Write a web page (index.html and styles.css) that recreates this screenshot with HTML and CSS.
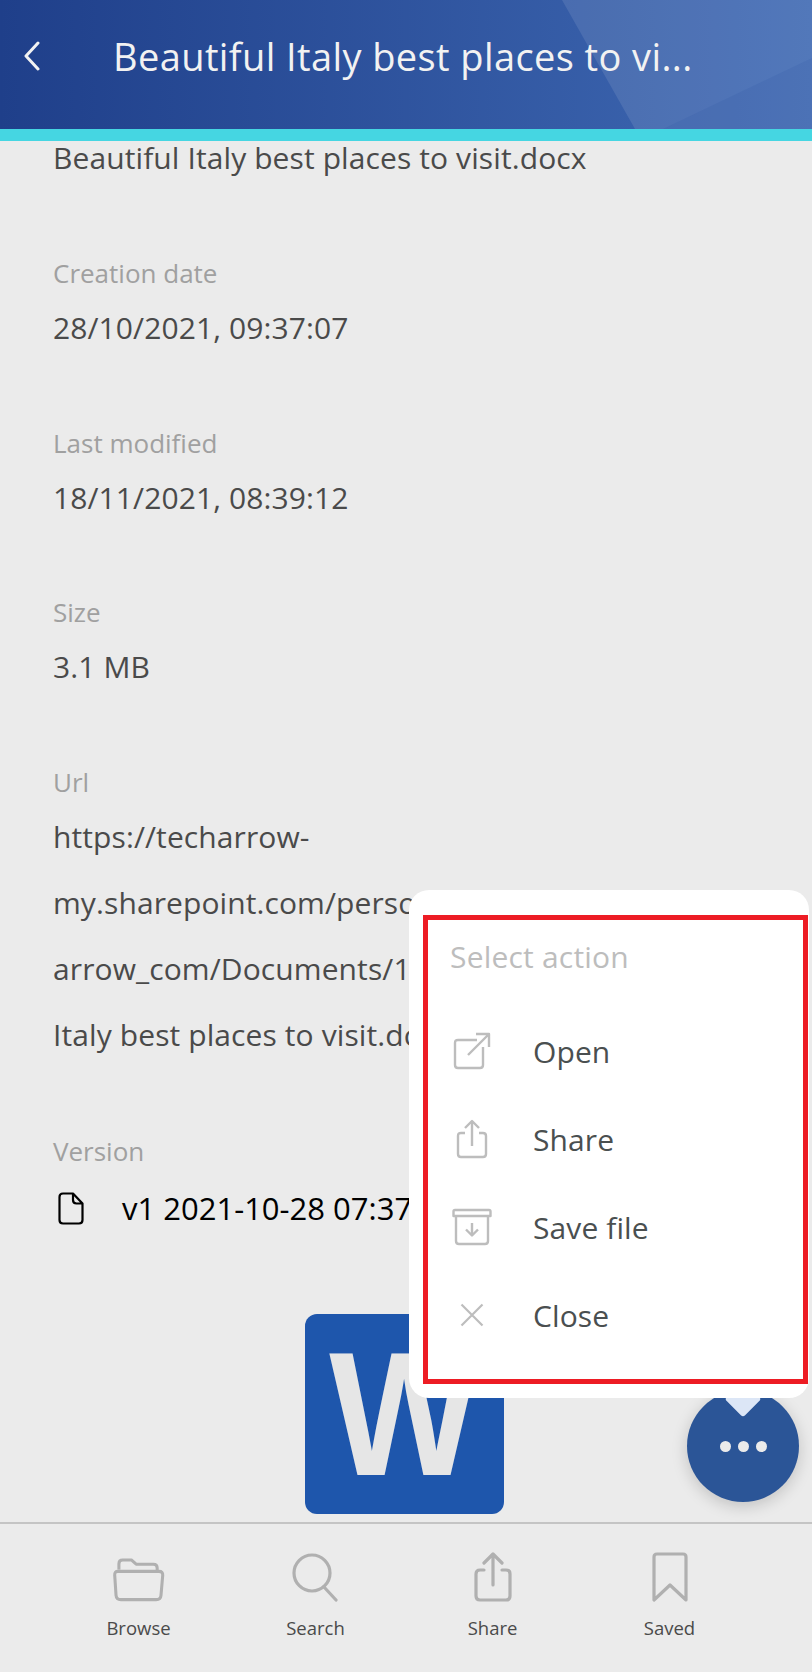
FILE: index.html
```html
<!DOCTYPE html>
<html lang="en">

<head>
    <meta charset="UTF-8">
    <meta name="viewport" content="width=device-width, initial-scale=1.0">
    <title>File details</title>
    <link rel="stylesheet" href="styles.css">
</head>

<body>
    <div class="page">
        <header class="top-bar">
            <svg class="top-bar-shapes" width="812" height="129" viewBox="0 0 812 129">
                <polygon points="562,0 812,0 812,129 635,129" fill="#ffffff" fill-opacity="0.1" />
                <polygon points="663,129 812,58 812,129" fill="#1f4a9c" fill-opacity="0.12" />
            </svg>
            <svg class="back-icon" width="20" height="30" viewBox="0 0 20 30">
                <path d="M16 2 L4 15 L16 28" fill="none" stroke="#f2f2f2" stroke-width="3" stroke-linecap="round" stroke-linejoin="round" />
            </svg>
            <h1 class="top-title">Beautiful Italy best places to vi...</h1>
        </header>

        <main class="details">
            <p class="file-name">Beautiful Italy best places to visit.docx</p>

            <div class="field">
                <div class="field-label">Creation date</div>
                <div class="field-value">28/10/2021, 09:37:07</div>
            </div>
            <div class="field">
                <div class="field-label">Last modified</div>
                <div class="field-value">18/11/2021, 08:39:12</div>
            </div>
            <div class="field">
                <div class="field-label">Size</div>
                <div class="field-value">3.1 MB</div>
            </div>
            <div class="field field-url">
                <div class="field-label">Url</div>
                <div class="field-value">https://techarrow-</div>
                <div class="field-value">my.sharepoint.com/person</div>
                <div class="field-value">arrow_com/Documents/1</div>
                <div class="field-value">Italy best places to visit.do</div>
            </div>
            <div class="field">
                <div class="field-label">Version</div>
                <div class="version-row">
                    <svg class="version-icon" width="26" height="33" viewBox="0 0 26 33">
                        <path d="M5 1.500 H15 L24.500 11.500 V28 Q24.500 31.500 21 31.500 H5 Q1.500 31.500 1.500 28 V5 Q1.500 1.500 5 1.500 Z M15 1.500 V8 Q15 11.500 18.500 11.500 H24.500" fill="none" stroke="#000" stroke-width="2.2" stroke-linejoin="round" />
                    </svg>
                    <span>v1 2021-10-28 07:37</span>
                </div>
            </div>

            <div class="word-logo"><span class="word-letter">W</span></div>
        </main>

        <nav class="tab-bar">
            <div class="tab">
                <svg width="52" height="44" viewBox="0 0 54 46">
                    <path d="M6 12 V6 Q6 2 10 2 H19 L24 6.500 H42 Q46 6.500 46 10.500 V14 M5 14 H48 Q52 14 51.800 18 L50 39 Q49.600 43.500 45 43.500 H8 Q3.400 43.500 3 39 L1.600 18 Q1.400 14 5 14 Z" fill="none" stroke="#b0b0b0" stroke-width="3.200" stroke-linejoin="round" />
                </svg>
                <span>Browse</span>
            </div>
            <div class="tab">
                <svg width="54" height="50" viewBox="0 0 54 50">
                    <ellipse cx="23" cy="21" rx="18" ry="18" fill="none" stroke="#b0b0b0" stroke-width="3.200" />
                    <path d="M35 35 L47 48" fill="none" stroke="#b0b0b0" stroke-width="3.200" stroke-linecap="round" />
                </svg>
                <span>Search</span>
            </div>
            <div class="tab">
                <svg width="40" height="50" viewBox="0 0 40 50">
                    <path d="M11 18 H7 Q3 18 3 22 V44 Q3 48 7 48 H33 Q37 48 37 44 V22 Q37 18 33 18 H29 M20 33 V2 M11 11 L20 2 L29 11" fill="none" stroke="#b0b0b0" stroke-width="3.200" stroke-linecap="round" stroke-linejoin="round" />
                </svg>
                <span>Share</span>
            </div>
            <div class="tab">
                <svg width="36" height="50" viewBox="0 0 36 50">
                    <path d="M2 48 V5 Q2 2 5 2 H31 Q34 2 34 5 V48 L18 33 Z" fill="none" stroke="#b0b0b0" stroke-width="3.200" stroke-linejoin="round" />
                </svg>
                <span>Saved</span>
            </div>
        </nav>

        <button class="fab" type="button">
            <span class="fab-dot"></span>
            <span class="fab-dot"></span>
            <span class="fab-dot"></span>
        </button>
        <div class="action-arrow"></div>

        <div class="action-menu">
            <div class="action-frame">
                <div class="action-title">Select action</div>
                <div class="action-row">
                    <span class="action-icon">
                        <svg width="38" height="38" viewBox="0 0 38 38">
                            <path d="M24 8 H5 Q2 8 2 11 V33 Q2 36 5 36 H27 Q30 36 30 33 V15 M15 23 L36 2 M23 2 H36 V15" fill="none" stroke="#bdbdbd" stroke-width="2.400" stroke-linejoin="round" />
                        </svg>
                    </span>
                    <span>Open</span>
                </div>
                <div class="action-row">
                    <span class="action-icon">
                        <svg width="32" height="40" viewBox="0 0 32 40">
                            <path d="M9 14 H5 Q2 14 2 17 V35 Q2 38 5 38 H27 Q30 38 30 35 V17 Q30 14 27 14 H23 M16 27 V2 M9 9 L16 2 L23 9" fill="none" stroke="#bdbdbd" stroke-width="2.400" stroke-linejoin="round" />
                        </svg>
                    </span>
                    <span>Share</span>
                </div>
                <div class="action-row">
                    <span class="action-icon">
                        <svg width="40" height="38" viewBox="0 0 40 38">
                            <path d="M3 2 H37 Q38.500 2 38.500 3.500 V8 H1.500 V3.500 Q1.500 2 3 2 Z M4 8 V33 Q4 36 7 36 H33 Q36 36 36 33 V8 M20 15 V27 M14 21.500 L20 27.500 L26 21.500" fill="none" stroke="#bdbdbd" stroke-width="2.400" stroke-linejoin="round" />
                        </svg>
                    </span>
                    <span>Save file</span>
                </div>
                <div class="action-row">
                    <span class="action-icon">
                        <svg width="24" height="24" viewBox="0 0 24 24">
                            <path d="M1.500 1.500 L22.500 22.500 M22.500 1.500 L1.500 22.500" fill="none" stroke="#bdbdbd" stroke-width="2.200" />
                        </svg>
                    </span>
                    <span>Close</span>
                </div>
            </div>
        </div>
    </div>
</body>

</html>
```

FILE: styles.css
```css
* {
    box-sizing: border-box;
}

body {
    margin: 0;
    font-family: "Open Sans", "Noto Sans", sans-serif;
}

.page {
    position: relative;
    display: flex;
    flex-direction: column;
    width: 812px;
    height: 1672px;
    overflow: hidden;
    background-color: #ebebeb;
}

/* header */
.top-bar {
    position: relative;
    display: flex;
    align-items: center;
    flex-shrink: 0;
    height: 141px;
    padding: 0 0 17px 22px;
    border-bottom: 12px solid #45d6e2;
    background: linear-gradient(90deg, #1f3f8a 0%, #3f69b3 100%);
}

.top-bar-shapes {
    position: absolute;
    top: 0;
    left: 0;
}

.back-icon {
    position: relative;
    flex-shrink: 0;
}

.top-title {
    position: relative;
    margin: 0 0 0 71px;
    font-size: 38px;
    font-weight: 400;
    letter-spacing: 0.4px;
    white-space: nowrap;
    color: #f2f2f2;
}

/* details */
.details {
    flex: 1;
    min-height: 0;
    padding: 0 57px 0 53px;
    white-space: nowrap;
}

.file-name {
    height: 34px;
    margin: 0;
    font-size: 30px;
    line-height: 34px;
    letter-spacing: 0.1px;
    color: #4a4a4a;
}

.field {
    margin-top: 77px;
}

.field + .field {
    margin-top: 60.6px;
}

.field-url {
    padding-bottom: 2px;
}

.field-label {
    height: 42px;
    margin-bottom: 1px;
    font-size: 26px;
    line-height: 42px;
    color: #a0a0a0;
}

.field-value {
    height: 66px;
    font-size: 30px;
    line-height: 66px;
    letter-spacing: 0.1px;
    color: #4a4a4a;
}

.version-row {
    display: flex;
    align-items: center;
    gap: 38px;
    height: 66px;
    margin-top: 3px;
    padding-left: 5px;
    font-size: 31px;
    color: #000;
}

.version-icon {
    flex-shrink: 0;
}

.word-logo {
    width: 199px;
    height: 200px;
    margin: 73px auto 0;
    border-radius: 12px;
    background-color: #1e56ac;
    font-family: "Liberation Sans", sans-serif;
    font-size: 176px;
    font-weight: 700;
    line-height: 200px;
    text-align: center;
    color: #e6e6e6;
}

.word-letter {
    display: inline-block;
    transform: scaleX(0.9);
}

/* bottom tabs */
.tab-bar {
    display: flex;
    flex-shrink: 0;
    height: 150px;
    padding: 21px 54px 0 50px;
    border-top: 2px solid #c4c4c4;
}

.tab {
    display: flex;
    flex: 1;
    flex-direction: column;
    align-items: center;
    justify-content: flex-end;
    height: 96px;
    font-size: 18.500px;
    line-height: 26px;
    color: #4a4a4a;
}

.tab svg {
    margin-bottom: 13px;
}

/* floating button */
.fab {
    position: absolute;
    top: 1390px;
    left: 687px;
    display: flex;
    align-items: center;
    justify-content: center;
    gap: 7px;
    width: 112px;
    height: 112px;
    padding: 0;
    border: none;
    border-radius: 50%;
    background-color: #2b5597;
    box-shadow: 0 4px 16px rgba(0, 0, 0, 0.18);
}

.fab-dot {
    width: 11px;
    height: 11px;
    border-radius: 50%;
    background-color: #ebebeb;
}

.action-arrow {
    position: absolute;
    top: 1386px;
    left: 730px;
    width: 26px;
    height: 26px;
    border-radius: 3px;
    background-color: #dce6f6;
    transform: rotate(45deg);
}

/* action popup */
.action-menu {
    position: absolute;
    top: 890px;
    left: 409px;
    width: 400px;
    height: 508px;
    padding: 25px 1px 0 14px;
    border-radius: 20px;
    background-color: #fff;
}

.action-frame {
    height: 469px;
    padding-top: 10px;
    border: 5px solid #ed1c24;
}

.action-title {
    height: 54px;
    margin-bottom: 23px;
    padding-left: 22px;
    font-size: 30px;
    line-height: 54px;
    letter-spacing: 0.2px;
    color: #bdbdbd;
}

.action-row {
    display: flex;
    align-items: center;
    height: 88px;
    font-size: 30px;
    letter-spacing: 0.1px;
    color: #4a4f50;
}

.action-icon {
    display: flex;
    align-items: center;
    justify-content: center;
    flex-shrink: 0;
    width: 84px;
    margin-left: 2px;
    margin-right: 19px;
}
```
